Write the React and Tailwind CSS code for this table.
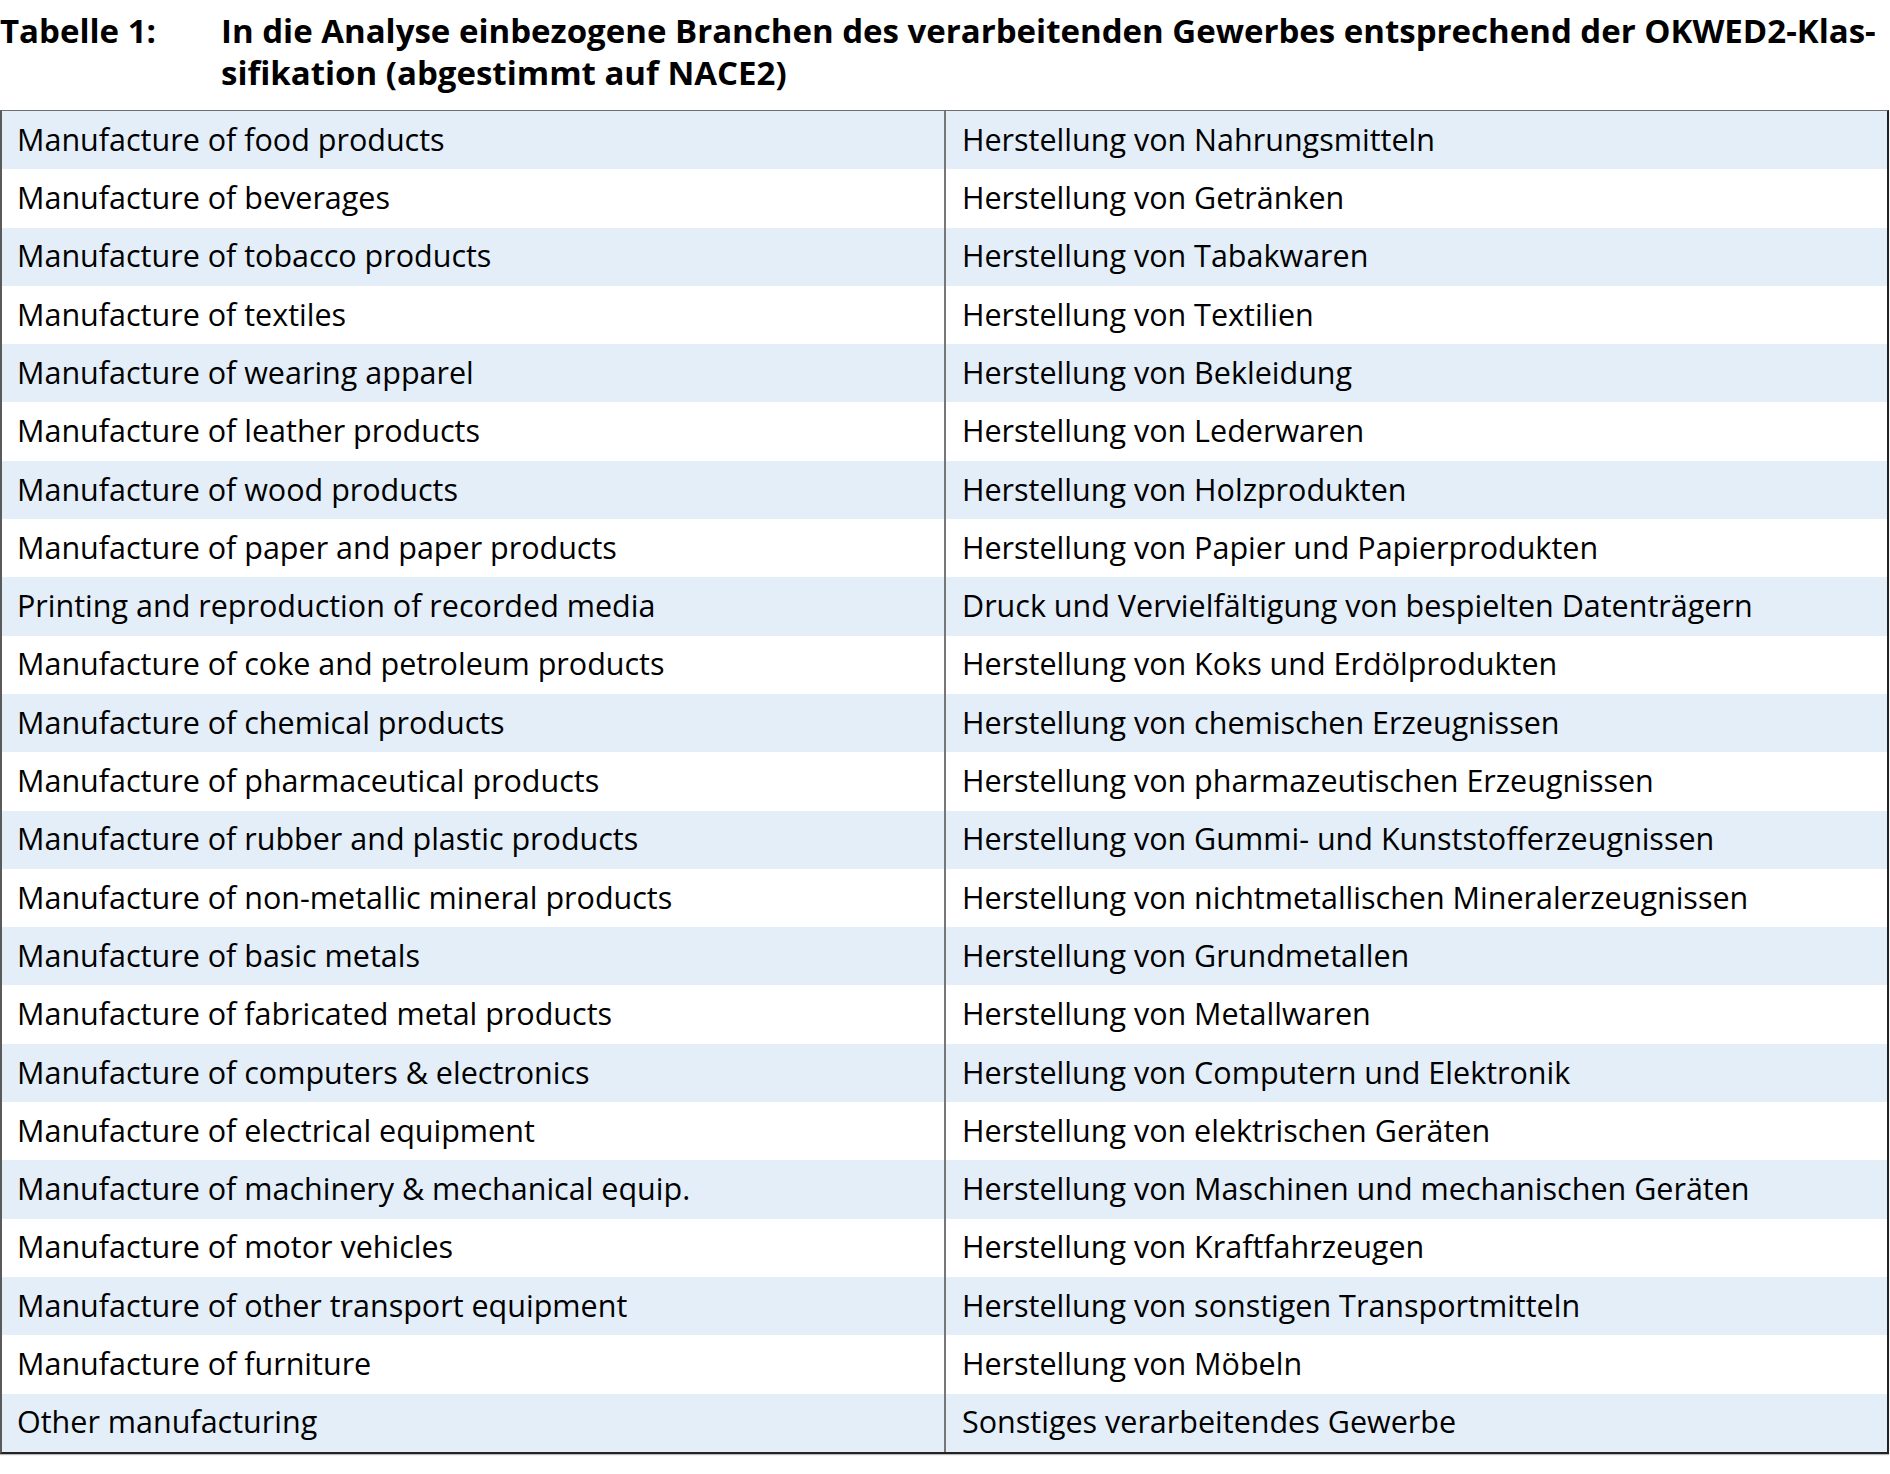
import React from 'react';

const rows = [
  ['Manufacture of food products', 'Herstellung von Nahrungsmitteln'],
  ['Manufacture of beverages', 'Herstellung von Getränken'],
  ['Manufacture of tobacco products', 'Herstellung von Tabakwaren'],
  ['Manufacture of textiles', 'Herstellung von Textilien'],
  ['Manufacture of wearing apparel', 'Herstellung von Bekleidung'],
  ['Manufacture of leather products', 'Herstellung von Lederwaren'],
  ['Manufacture of wood products', 'Herstellung von Holzprodukten'],
  ['Manufacture of paper and paper products', 'Herstellung von Papier und Papierprodukten'],
  ['Printing and reproduction of recorded media', 'Druck und Vervielfältigung von bespielten Datenträgern'],
  ['Manufacture of coke and petroleum products', 'Herstellung von Koks und Erdölprodukten'],
  ['Manufacture of chemical products', 'Herstellung von chemischen Erzeugnissen'],
  ['Manufacture of pharmaceutical products', 'Herstellung von pharmazeutischen Erzeugnissen'],
  ['Manufacture of rubber and plastic products', 'Herstellung von Gummi- und Kunststofferzeugnissen'],
  ['Manufacture of non-metallic mineral products', 'Herstellung von nichtmetallischen Mineralerzeugnissen'],
  ['Manufacture of basic metals', 'Herstellung von Grundmetallen'],
  ['Manufacture of fabricated metal products', 'Herstellung von Metallwaren'],
  ['Manufacture of computers & electronics', 'Herstellung von Computern und Elektronik'],
  ['Manufacture of electrical equipment', 'Herstellung von elektrischen Geräten'],
  ['Manufacture of machinery & mechanical equip.', 'Herstellung von Maschinen und mechanischen Geräten'],
  ['Manufacture of motor vehicles', 'Herstellung von Kraftfahrzeugen'],
  ['Manufacture of other transport equipment', 'Herstellung von sonstigen Transportmitteln'],
  ['Manufacture of furniture', 'Herstellung von Möbeln'],
  ['Other manufacturing', 'Sonstiges verarbeitendes Gewerbe'],
];

const App = () => {
  return (
    <div className="w-[1890px] min-h-[1474px] bg-white text-black font-['Open_Sans',sans-serif]">
      {/* Caption */}
      <div className="flex h-[110px] pt-[10px] font-bold text-[33px] leading-[42px]">
        <div className="w-[221px] shrink-0">Tabelle 1:</div>
        <div className="whitespace-nowrap">
          In die Analyse einbezogene Branchen des verarbeitenden Gewerbes entsprechend der OKWED2-Klas-
          <br />
          sifikation (abgestimmt auf NACE2)
        </div>
      </div>

      {/* Table */}
      <div className="w-[1889px] border-t-[1.5px] border-t-[#6f6f6f] border-l-2 border-l-[#5a5a5a] border-r-2 border-r-[#222] border-b-2 border-b-[#222] shadow-[0_1px_1px_#bbb]">
        {rows.map(([en, de], i) => (
          <div
            key={i}
            className={`flex h-[58.3px] text-[30.5px] ${i % 2 === 0 ? 'bg-[#e3eef8]' : 'bg-white'}`}
          >
            <div className="w-[942px] shrink-0 flex items-center pl-[15px] pb-[1px] whitespace-nowrap">{en}</div>
            <div className="flex-1 flex items-center pl-[16px] pb-[1px] border-l-2 border-l-[#777] whitespace-nowrap">{de}</div>
          </div>
        ))}
      </div>
    </div>
  );
};

export default App;
